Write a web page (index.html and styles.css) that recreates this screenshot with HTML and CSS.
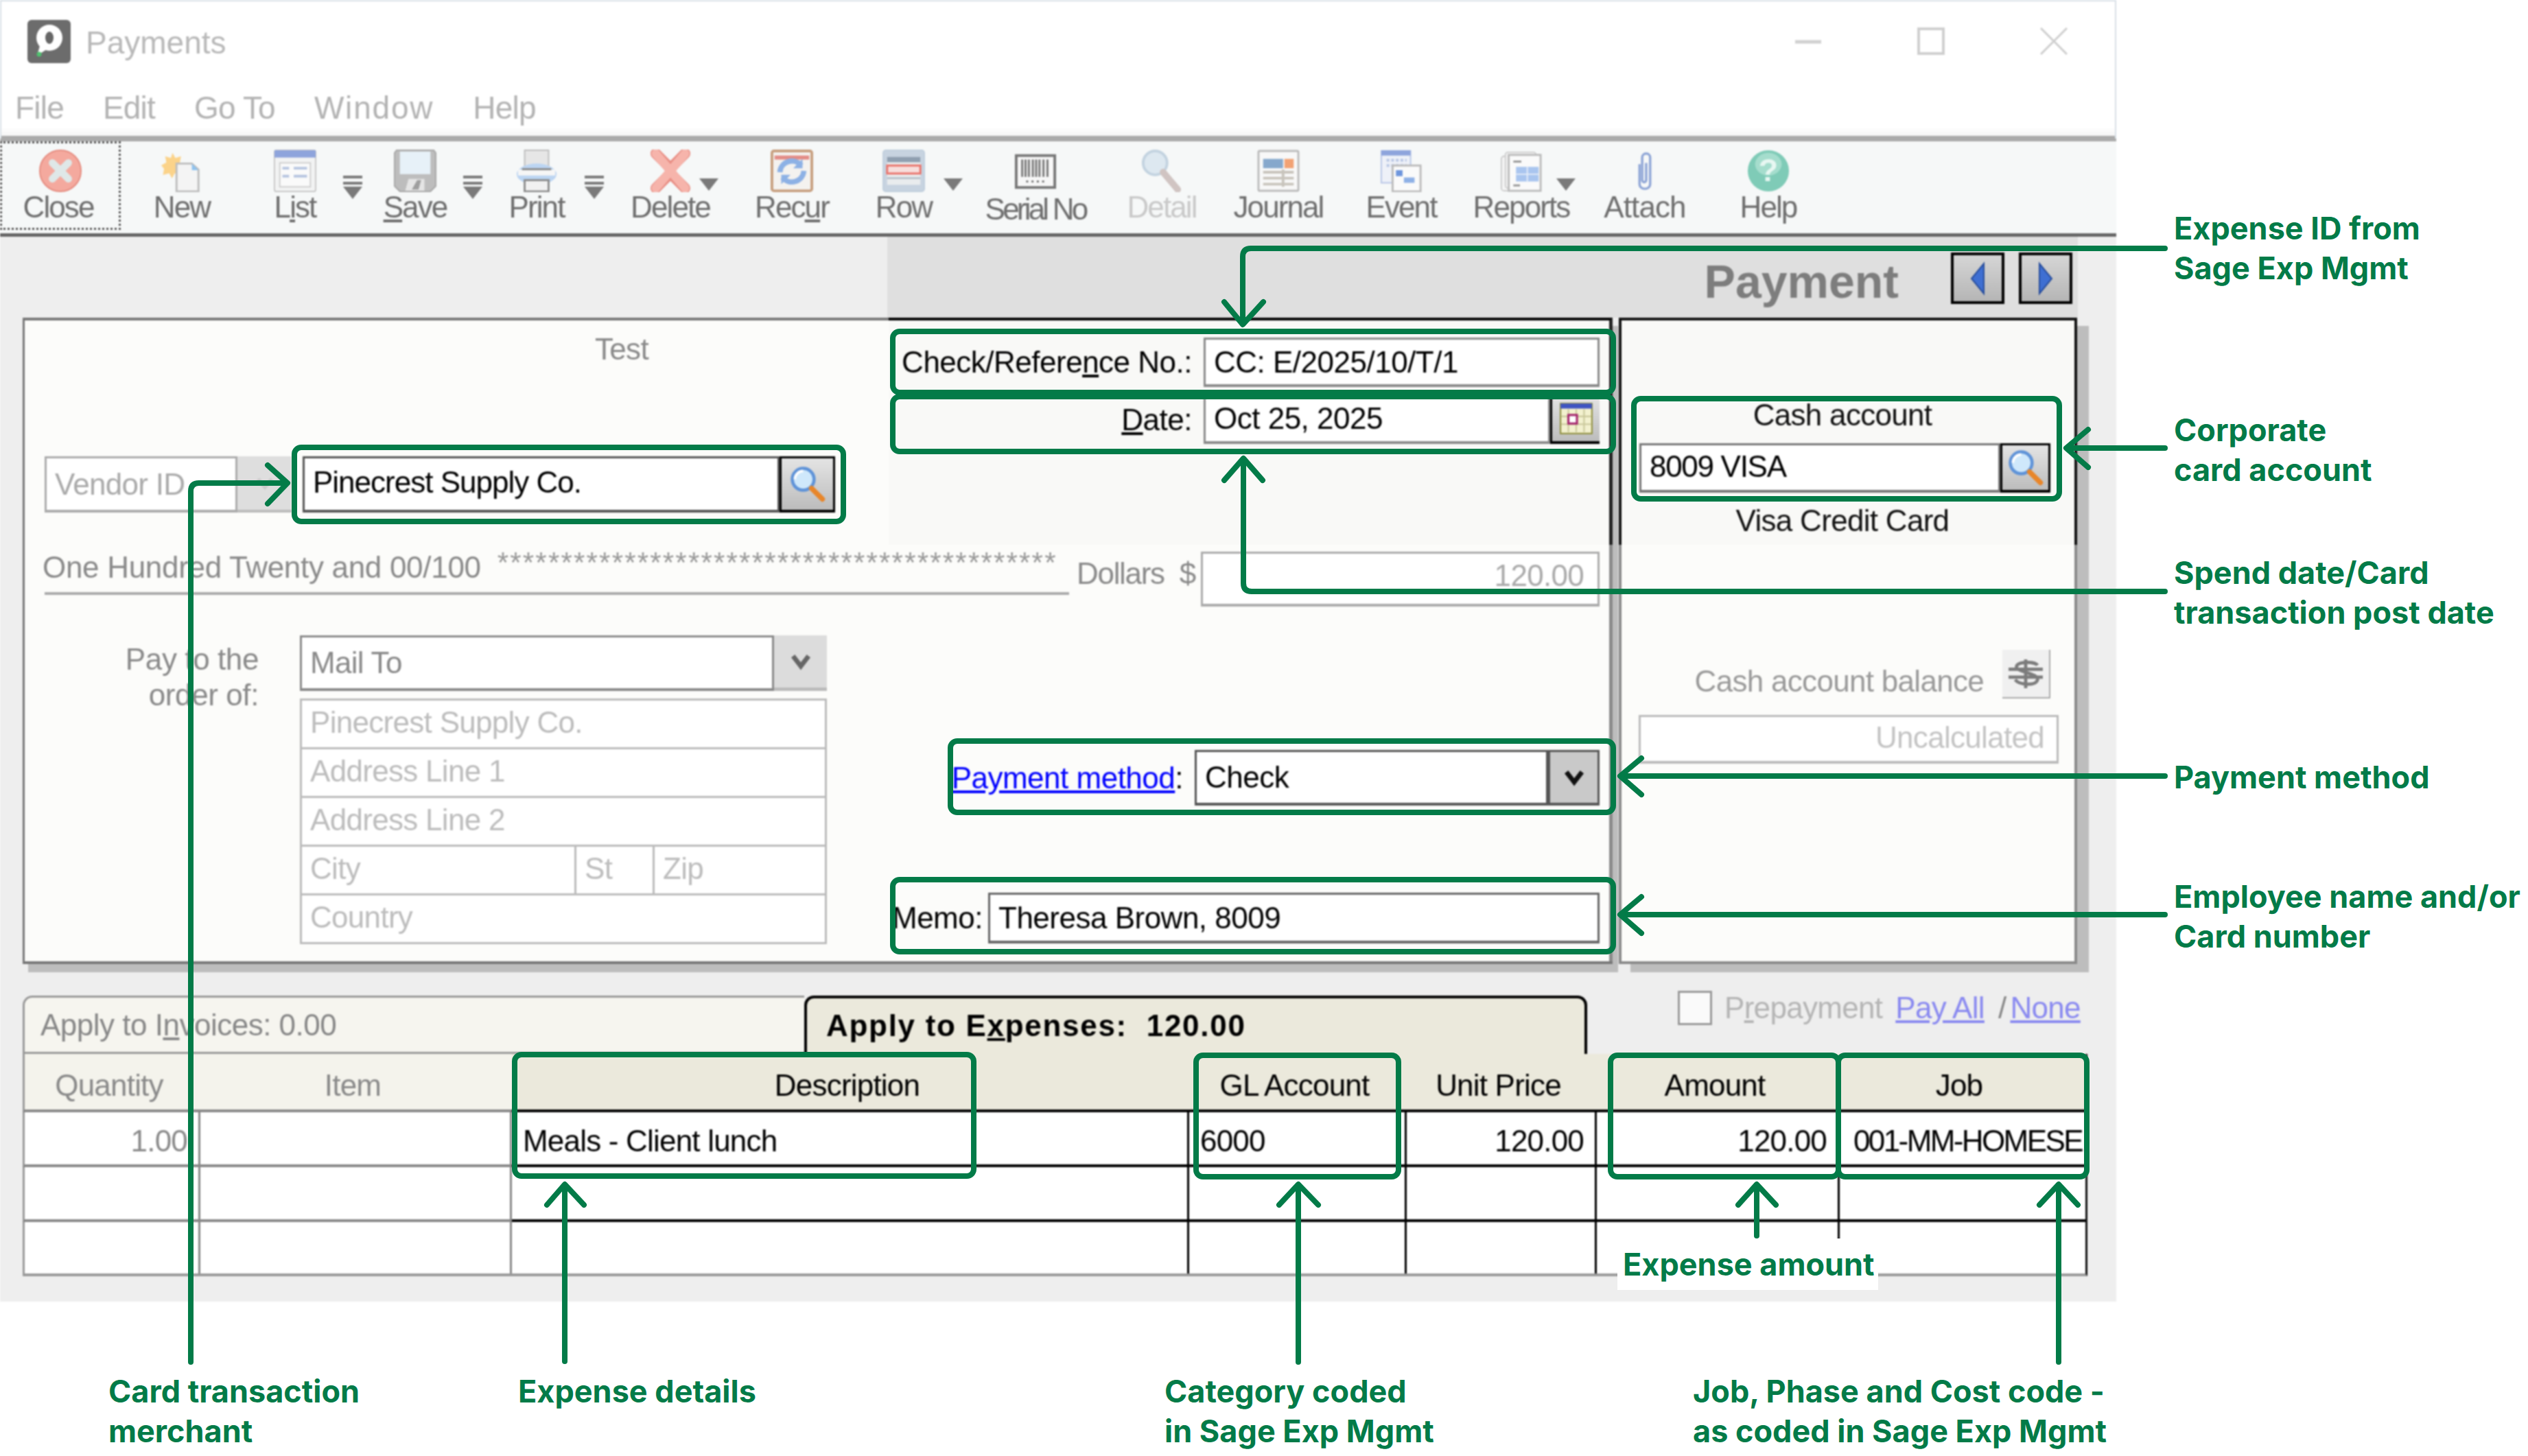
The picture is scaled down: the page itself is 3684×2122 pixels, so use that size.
FILE: index.html
```html
<!DOCTYPE html>
<html lang="en">
<head>
  <meta charset="UTF-8" />
  <title>Payments</title>
  <link rel="stylesheet" href="styles.css">
</head>
<body>
  <svg class="sprites" width="0" height="0">
    <symbol id="lens" viewBox="0 0 60 60">
      <circle cx="23" cy="22" r="17" fill="#cfe8fb" stroke="#5f93d8" stroke-width="5"/>
      <path d="M10 22a13 13 0 0 1 13-13" fill="none" stroke="#fff" stroke-width="4"/>
      <path d="M36 36l17 17" stroke="#e8862a" stroke-width="8" stroke-linecap="round"/>
    </symbol>
  </svg>

  <div class="window">
    <header class="titlebar">
      <svg class="app-icon" viewBox="0 0 63 63">
        <rect width="63" height="63" rx="6" fill="#6c6c6c"/>
        <circle cx="32" cy="26" r="19" fill="#fff"/>
        <path d="M18 38l-4 14 14-9z" fill="#fff"/>
        <ellipse cx="32" cy="26" rx="6" ry="9" fill="#666"/>
        <circle cx="17" cy="50" r="3.5" fill="#4fc36f"/>
      </svg>
      <span class="app-title">Payments</span>
      <div class="win-controls">
        <svg class="win-ctl" viewBox="0 0 40 40"><path d="M1 21h38" stroke="#d0d0d0" stroke-width="5"/></svg>
        <svg class="win-ctl" viewBox="0 0 40 40"><rect x="2" y="2" width="36" height="36" fill="none" stroke="#cfcfcf" stroke-width="4"/></svg>
        <svg class="win-ctl" viewBox="0 0 40 40"><path d="M1 1l38 38M39 1L1 39" stroke="#cfcfcf" stroke-width="3"/></svg>
      </div>
    </header>

    <nav class="menubar">
      <span>File</span><span>Edit</span><span>Go To</span><span class="menu-wide">Window</span><span>Help</span>
    </nav>

    <div class="toolbar">
      <div class="tool t-close focused">
        <svg class="tool-icon" viewBox="0 0 64 64"><ellipse cx="32" cy="32" rx="31" ry="31" fill="#f4a99e" stroke="#e58c80" stroke-width="2"/><path d="M20 20l24 24M44 20L20 44" stroke="#dfe8e8" stroke-width="11" stroke-linecap="round"/></svg>
        <span class="tool-label">Close</span>
      </div>
      <div class="tool t-new">
        <svg class="tool-icon" viewBox="0 0 64 64"><path d="M20 0l5 9 10-3-2 11 9 5-9 6 2 11-11-3-5 9-5-9-11 3 2-11-5-6 9-5-2-11 10 3z" fill="#fbd38a" transform="translate(1 5) scale(.85)"/><path d="M24 21h23l10 9v33H24z" fill="#f4f4f4" stroke="#bdbdbd" stroke-width="3"/><path d="M47 21l10 10H47z" fill="#8fc3ef"/></svg>
        <span class="tool-label">New</span>
      </div>
      <div class="tool t-list">
        <svg class="tool-icon" viewBox="0 0 64 64"><rect x="1" y="1" width="62" height="62" rx="3" fill="#f2f3f3" stroke="#c8c8c8" stroke-width="2"/><rect x="1" y="1" width="62" height="11" fill="#8ea4dc"/><rect x="9" y="20" width="46" height="36" fill="#fafafa" stroke="#cfcfcf" stroke-width="2"/><path d="M13 28h10M13 40h10M30 28h20M30 40h20" stroke="#b7c5e0" stroke-width="4"/></svg>
        <span class="tool-label">L<u>i</u>st</span>
        <span class="caret stacked"></span>
      </div>
      <div class="tool t-save">
        <svg class="tool-icon" viewBox="0 0 64 64"><path d="M4 1h56l3 4v50l-8 8H9l-8-8V5z" fill="#bdbdbd" stroke="#a8a8a8" stroke-width="2"/><rect x="9" y="3" width="46" height="34" fill="#e7f1f8"/><path d="M17 62l5-18h24v18z" fill="#e5e5e5"/><path d="M27 60l8-14h6l-4 14z" fill="#9e9e9e"/></svg>
        <span class="tool-label"><u>S</u>ave</span>
        <span class="caret stacked"></span>
      </div>
      <div class="tool t-print">
        <svg class="tool-icon" viewBox="0 0 64 64"><rect x="14" y="1" width="36" height="32" fill="#e6e6e6" stroke="#bdbdbd" stroke-width="2"/><ellipse cx="32" cy="37" rx="30" ry="16" fill="#bcd5f2"/><rect x="4" y="30" width="56" height="9" fill="#f6f6f6"/><rect x="10" y="28" width="44" height="3" fill="#8a8a8a"/><rect x="14" y="46" width="36" height="17" fill="#f1f1f1" stroke="#8c8c8c" stroke-width="3"/></svg>
        <span class="tool-label">Print</span>
        <span class="caret stacked"></span>
      </div>
      <div class="tool t-delete">
        <svg class="tool-icon" viewBox="0 0 64 64"><path d="M10 6l22 22L54 6M10 58l22-22 22 22" fill="none" stroke="#e88e84" stroke-width="16" stroke-linecap="round" stroke-linejoin="round"/><path d="M10 6l44 52M54 6L10 58" stroke="#f6b4ab" stroke-width="13" stroke-linecap="round"/></svg>
        <span class="tool-label">Delete</span>
        <span class="caret caret-delete"></span>
      </div>
      <div class="tool t-recur">
        <svg class="tool-icon" viewBox="0 0 64 64"><rect x="2" y="2" width="60" height="60" rx="3" fill="#f4f2ef" stroke="#c79f7f" stroke-width="4"/><rect x="6" y="9" width="52" height="6" fill="#e38c86"/><path d="M14 34a18 18 0 0 1 32-10M50 32a18 18 0 0 1-32 10" fill="none" stroke="#8db1e5" stroke-width="8"/><path d="M48 14v14H34zM16 52V38h14z" fill="#8db1e5"/></svg>
        <span class="tool-label">Rec<u>u</u>r</span>
      </div>
      <div class="tool t-row">
        <svg class="tool-icon" viewBox="0 0 64 64"><rect x="1" y="1" width="62" height="62" rx="4" fill="#c7d3e0" stroke="#c0cfdd" stroke-width="2"/><rect x="7" y="11" width="50" height="42" fill="#e9ecee"/><rect x="7" y="11" width="50" height="8" fill="#8f9fb0"/><path d="M7 33h50M7 43h50" stroke="#b6bfc8" stroke-width="3"/><rect x="7" y="24" width="50" height="12" fill="#f7dedc" stroke="#e9726a" stroke-width="3"/></svg>
        <span class="tool-label">Row</span>
        <span class="caret caret-row"></span>
      </div>
      <div class="tool t-serial">
        <svg class="tool-icon" viewBox="0 0 64 64"><rect x="3" y="9" width="58" height="48" fill="#f7f7f7" stroke="#777" stroke-width="4"/><path d="M12 15v26M17 15v26M22 15v26M28 15v26M33 15v26M38 15v26M44 15v26M50 15v26" stroke="#777" stroke-width="3"/><path d="M18 48h3M26 48h3M34 48h3M42 48h3" stroke="#777" stroke-width="3"/></svg>
        <span class="tool-label">Serial No</span>
      </div>
      <div class="tool t-detail dim">
        <svg class="tool-icon" viewBox="0 0 64 64"><circle cx="22" cy="20" r="18" fill="#dde8f0" stroke="#c3d3e0" stroke-width="4"/><path d="M34 34l22 26" stroke="#d0c4c2" stroke-width="10" stroke-linecap="round"/></svg>
        <span class="tool-label">Detail</span>
      </div>
      <div class="tool t-journal">
        <svg class="tool-icon" viewBox="0 0 64 64"><rect x="2" y="2" width="60" height="60" rx="2" fill="#f8f8f8" stroke="#bbb" stroke-width="3"/><rect x="9" y="14" width="30" height="14" fill="#86a8cc"/><rect x="41" y="14" width="14" height="14" fill="#f2a274"/><path d="M9 34h46M9 43h46M9 52h46M39 30v26" stroke="#c8c4bc" stroke-width="4"/></svg>
        <span class="tool-label">Journal</span>
      </div>
      <div class="tool t-event">
        <svg class="tool-icon" viewBox="0 0 64 64"><rect x="2" y="2" width="44" height="48" fill="#eef1f8" stroke="#b7c5e6" stroke-width="2"/><rect x="2" y="1" width="44" height="8" fill="#8ea4dc"/><path d="M10 16h30M10 24h30" stroke="#b8c6e4" stroke-width="4" stroke-dasharray="4 3"/><rect x="19" y="24" width="42" height="39" fill="#fafafa" stroke="#bbb" stroke-width="3"/><rect x="24" y="31" width="10" height="9" fill="#6d95dc"/><rect x="36" y="42" width="16" height="8" fill="#8eb0e6"/></svg>
        <span class="tool-label">Event</span>
      </div>
      <div class="tool t-reports">
        <svg class="tool-icon" viewBox="0 0 64 64"><rect x="2" y="10" width="46" height="52" rx="4" fill="#f5f5f5" stroke="#ccc" stroke-width="2"/><rect x="8" y="4" width="46" height="54" rx="4" fill="#f5f5f5" stroke="#ccc" stroke-width="2"/><rect x="13" y="8" width="48" height="54" fill="#fafafa" stroke="#bbb" stroke-width="3"/><path d="M20 18h12M20 54h10" stroke="#999" stroke-width="3"/><rect x="24" y="26" width="34" height="22" fill="#a9c5ef"/><path d="M24 37h34M41 26v22" stroke="#e6eef9" stroke-width="2"/></svg>
        <span class="tool-label">Reports</span>
        <span class="caret caret-reports"></span>
      </div>
      <div class="tool t-attach">
        <svg class="tool-icon" viewBox="0 0 64 64"><path d="M24 22V52a8 7 0 0 0 16 0V12a6 6 0 0 0-12 0V46a3 3 0 0 0 6 0V20" fill="none" stroke="#8ea5d6" stroke-width="3.5"/></svg>
        <span class="tool-label">Attach</span>
      </div>
      <div class="tool t-help">
        <svg class="tool-icon" viewBox="0 0 64 64"><ellipse cx="32" cy="32" rx="31" ry="31" fill="#7fcbb7"/><ellipse cx="32" cy="22" rx="20" ry="17" fill="#a5ddcd"/><text class="help-mark" x="32" y="47" text-anchor="middle">?</text></svg>
        <span class="tool-label">Help</span>
      </div>
    </div>

    <main class="content">
      <div class="heading">
        <h1 class="doc-title">Payment</h1>
        <button class="nav-btn"><svg viewBox="0 0 30 50"><path d="M24 3v44L6 25z" fill="#3f6fd2" stroke="#274d9c" stroke-width="2"/></svg></button>
        <button class="nav-btn"><svg viewBox="0 0 30 50"><path d="M6 3v44l18-22z" fill="#3f6fd2" stroke="#274d9c" stroke-width="2"/></svg></button>
      </div>

      <div class="panels">
        <section class="panel-left">
          <div class="band-top">
            <div class="payee-top">
              <div class="test-line">Test</div>
              <div class="vendor-row">
                <div class="field vendor-id faded">Vendor ID</div>
                <div class="drop-btn vendor-drop"><svg viewBox="0 0 30 30"><path d="M6 10l9 10 9-10" fill="none" stroke="#c9c9c9" stroke-width="5"/></svg></div>
                <div class="field vendor-name">Pinecrest Supply Co.</div>
                <div class="look-btn vendor-look"><svg class="lens"><use href="#lens"/></svg></div>
              </div>
            </div>
            <div class="check-top">
              <div class="field-row ref-row">
                <label class="field-label">Check/Refere<u>n</u>ce No.:</label>
                <div class="field">CC: E/2025/10/T/1</div>
              </div>
              <div class="field-row date-row">
                <label class="field-label"><u>D</u>ate:</label>
                <div class="date-box">
                  <div class="field date-field">Oct 25, 2025</div>
                  <div class="look-btn cal-btn">
                    <svg viewBox="0 0 50 50"><rect x="3" y="4" width="44" height="42" fill="#f3f1cf" stroke="#8e8e3c" stroke-width="2"/><rect x="3" y="4" width="44" height="7" fill="#3f55c2"/><path d="M14 12v32M25 12v32M36 12v32M4 22h42M4 33h42" stroke="#c9c79a" stroke-width="2"/><rect x="14" y="20" width="12" height="12" fill="#fff" stroke="#a4246c" stroke-width="3"/></svg>
                  </div>
                </div>
              </div>
            </div>
          </div>

          <div class="band-amount">
            <div class="words">
              <span class="words-text">One Hundred Twenty and 00/100</span>
              <span class="stars">********************************************</span>
            </div>
            <div class="dollars">Dollars&nbsp;&nbsp;$</div>
            <div class="field amount-field faded">120.00</div>
          </div>

          <div class="band-bottom">
            <div class="payee-bottom">
              <div class="pay-label">Pay to the<br>order of:</div>
              <div class="address">
                <div class="mail-row">
                  <div class="field mail-field">Mail To</div>
                  <div class="drop-btn mail-drop"><svg viewBox="0 0 30 30"><path d="M5 8l10 13 10-13" fill="none" stroke="#666" stroke-width="6"/></svg></div>
                </div>
                <div class="addr-lines">
                  <div class="addr-line">Pinecrest Supply Co.</div>
                  <div class="addr-line">Address Line 1</div>
                  <div class="addr-line">Address Line 2</div>
                  <div class="addr-line addr-city">
                    <span>City</span><span>St</span><span>Zip</span>
                  </div>
                  <div class="addr-line">Country</div>
                </div>
              </div>
            </div>
            <div class="check-bottom">
              <div class="field-row method-row">
                <label class="field-label"><a class="link" href="#">Payment method</a>:</label>
                <div class="method-box">
                  <div class="field method-field">Check</div>
                  <div class="drop-btn method-drop"><svg viewBox="0 0 30 30"><path d="M5 8l10 13 10-13" fill="none" stroke="#111" stroke-width="6"/></svg></div>
                </div>
              </div>
              <div class="memo-row">
                <label class="field-label">Memo:</label>
                <div class="field memo-field">Theresa Brown, 8009</div>
              </div>
            </div>
          </div>
        </section>

        <section class="panel-right">
          <div class="cash-top">
            <div class="cash-title">Cash account</div>
            <div class="cash-input">
              <div class="field cash-field">8009 VISA</div>
              <div class="look-btn cash-look"><svg class="lens"><use href="#lens"/></svg></div>
            </div>
            <div class="cash-title cash-name">Visa Credit Card</div>
          </div>
          <div class="cash-bottom">
            <div class="balance-row">
              <span>Cash account balance</span>
              <div class="dollar-btn">
                <svg viewBox="0 0 60 50"><path d="M48 12c-4-6-30-6-32 2s34 10 32 20-28 8-34 0M4 18h52M4 30h52M30 3v44" fill="none" stroke="#7c7c7c" stroke-width="5"/></svg>
              </div>
            </div>
            <div class="field uncalc">Uncalculated</div>
          </div>
        </section>
      </div>

      <div class="tabs-row">
        <div class="tab tab-off">Apply to I<u>n</u>voices: 0.00</div>
        <div class="tab tab-on">Apply to E<u>x</u>penses: &nbsp;120.00</div>
        <div class="prepay">
          <span class="checkbox"></span>
          <span class="prepay-label">P<u>r</u>epayment</span>
          <a class="link soft" href="#">Pay All</a>
          <span class="slash">/</span>
          <a class="link soft" href="#">None</a>
        </div>
      </div>

      <table class="lines">
        <colgroup>
          <col class="c-qty"><col class="c-item"><col class="c-desc"><col class="c-gl"><col class="c-price"><col class="c-amt"><col class="c-job">
        </colgroup>
        <thead>
          <tr>
            <th class="off">Quantity</th>
            <th class="off">Item</th>
            <th>Description</th>
            <th>GL Account</th>
            <th>Unit Price</th>
            <th>Amount</th>
            <th>Job</th>
          </tr>
        </thead>
        <tbody>
          <tr>
            <td class="off num">1.00</td>
            <td class="off"></td>
            <td>Meals - Client lunch</td>
            <td>6000</td>
            <td class="num">120.00</td>
            <td class="num">120.00</td>
            <td class="job">001-MM-HOMESE</td>
          </tr>
          <tr><td class="off"></td><td class="off"></td><td></td><td></td><td></td><td></td><td></td></tr>
          <tr><td class="off"></td><td class="off"></td><td></td><td></td><td></td><td></td><td></td></tr>
        </tbody>
      </table>
    </main>
  </div>

  <!-- callouts drawn over the screenshot -->
  <svg class="marks" viewBox="0 0 3684 2122">
    <g class="box">
      <rect x="429" y="652" width="800" height="108" rx="10"/>
      <rect x="1301" y="483" width="1050" height="89" rx="10"/>
      <rect x="1301" y="578" width="1050" height="80" rx="10"/>
      <rect x="2381" y="581" width="620" height="146" rx="10"/>
      <rect x="1385" y="1080" width="966" height="104" rx="10"/>
      <rect x="1301" y="1282" width="1050" height="105" rx="10"/>
      <rect x="750" y="1537" width="669" height="177" rx="10"/>
      <rect x="1743" y="1538" width="295" height="177" rx="10"/>
      <rect x="2347" y="1538" width="332" height="177" rx="10"/>
      <rect x="2679" y="1538" width="362" height="177" rx="10"/>
    </g>
    <g class="arrow">
      <path d="M3155 362H1823Q1811 362 1811 374V471"/><path d="M1784 440L1811 473L1841 440"/>
      <path d="M3155 862H1824Q1812 862 1812 850V672"/><path d="M1784 700L1812 668L1840 700"/>
      <path d="M3155 653H3015"/><path d="M3043 626L3011 653L3043 681"/>
      <path d="M3155 1131H2365"/><path d="M2392 1105L2361 1131L2392 1158"/>
      <path d="M3155 1333H2365"/><path d="M2392 1307L2361 1333L2392 1360"/>
      <path d="M278 1985V716Q278 704 290 704H415"/><path d="M390 678L419 704L390 734"/>
      <path d="M823 1984V1730"/><path d="M797 1756L823 1726L851 1756"/>
      <path d="M1892 1985V1730"/><path d="M1864 1756L1892 1726L1921 1756"/>
      <path d="M2560 1801V1730"/><path d="M2533 1756L2560 1726L2588 1756"/>
      <path d="M3000 1985V1730"/><path d="M2972 1756L3000 1726L3028 1756"/>
    </g>
  </svg>

  <p class="note n-expense-id">Expense ID from<br>Sage Exp Mgmt</p>
  <p class="note n-corporate">Corporate<br>card account</p>
  <p class="note n-spend">Spend date/Card<br>transaction post date</p>
  <p class="note n-method">Payment method</p>
  <p class="note n-employee">Employee name and/or<br>Card number</p>
  <p class="note n-merchant">Card transaction<br>merchant</p>
  <p class="note n-details">Expense details</p>
  <p class="note n-category">Category coded<br>in Sage Exp Mgmt</p>
  <p class="note n-job">Job, Phase and Cost code -<br>as coded in Sage Exp Mgmt</p>
  <p class="note n-amount">Expense amount</p>
</body>
</html>
```

FILE: styles.css
```css
* {
  box-sizing: border-box;
}

html, body {
  margin: 0;
  background: #fff;
}

body {
  position: relative;
  width: 3684px;
  height: 2122px;
  overflow: hidden;
  font-family: "Liberation Sans", Arial, sans-serif;
}

.sprites {
  position: absolute;
}

/* window */
.window {
  position: relative;
  width: 3084px;
  height: 1897px;
  display: flex;
  flex-direction: column;
  background: #eee;
  font-size: 44px;
  letter-spacing: -0.7px;
  color: #000;
  filter: blur(0.9px);
}

.window::after {
  content: "";
  position: absolute;
  inset: 0 0 auto 0;
  height: 200px;
  border: solid #d7dfe6;
  border-width: 2px 2px 0 2px;
}

.titlebar {
  height: 120px;
  flex: none;
  display: flex;
  align-items: center;
  gap: 22px;
  padding-left: 40px;
  background: #fff;
}

.app-icon {
  width: 63px;
  height: 63px;
}

.app-title {
  margin-top: 3px;
  font-size: 46px;
  letter-spacing: 0;
  color: #b9b9b9;
}

.win-controls {
  margin-left: auto;
  margin-right: 71px;
  display: flex;
  gap: 139px;
}

.win-ctl {
  width: 40px;
  height: 40px;
}

.menubar {
  height: 78px;
  flex: none;
  display: flex;
  gap: 57px;
  padding-left: 22px;
  padding-top: 12px;
  font-size: 46px;
  letter-spacing: -0.8px;
  line-height: 50px;
  color: #b3b3b3;
  background: linear-gradient(#fff 84%, #f5f5f5);
}

.menu-wide {
  letter-spacing: 1.8px;
}

/* toolbar */
.toolbar {
  height: 147px;
  flex: none;
  display: flex;
  background: #f6f8f8;
  border-top: 8px solid #aaa;
  border-bottom: 5px solid #666;
}

.tool {
  position: relative;
  flex: none;
  display: flex;
  flex-direction: column;
  align-items: center;
  padding-top: 12px;
  font-size: 44px;
  letter-spacing: -1.9px;
  color: #6e6e6e;
}

.tool-icon {
  width: 62px;
  height: 62px;
  flex: none;
}

.tool-label {
  line-height: 44px;
  white-space: nowrap;
}

.focused {
  outline: 3px dotted #555;
  outline-offset: -3px;
  height: 129px;
}

.t-close .tool-label {
  margin-right: 6px;
}

.dim {
  color: #c9c9c9;
}

.t-close { width: 176px; }
.t-new { width: 178px; }
.t-list { width: 152px; }
.t-save { width: 198px; }
.t-print { width: 156px; }
.t-delete { width: 234px; }
.t-recur { width: 120px; }
.t-row { width: 206px; }
.t-serial { width: 178px; letter-spacing: -3.8px; }
.t-detail { width: 190px; }
.t-journal { width: 150px; }
.t-event { width: 208px; }
.t-reports { width: 142px; }
.t-attach { width: 218px; letter-spacing: -0.9px; }
.t-help { width: 142px; }

.t-serial .tool-label {
  margin-top: 3px;
}

.caret {
  position: absolute;
  top: 54px;
  left: calc(50% + 42px);
  width: 0;
  height: 0;
  border-left: 14px solid transparent;
  border-right: 14px solid transparent;
  border-top: 18px solid #7a7a7a;
}

.caret-row { left: calc(50% + 58px); }
.caret-reports { left: calc(50% + 51px); }

.caret.stacked {
  left: calc(50% + 70px);
  top: 66px;
}

.caret.stacked::before {
  content: "";
  position: absolute;
  left: -14px;
  top: -25px;
  width: 28px;
  height: 4px;
  background: #7a7a7a;
  box-shadow: 0 -9px 0 #7a7a7a;
}

.help-mark {
  font-size: 48px;
  font-weight: 700;
  fill: #e8f7f2;
  letter-spacing: 0;
}

/* form area */
.content {
  flex: 1;
  display: flex;
  flex-direction: column;
  background: #eee;
}

.heading {
  height: 118px;
  margin-left: 1293px;
  margin-right: 56px;
  padding-top: 23px;
  padding-right: 8px;
  display: flex;
  justify-content: flex-end;
  background: #dfdfdf;
}

.doc-title {
  margin: 4px 76px 0 0;
  font-size: 68px;
  line-height: 76px;
  letter-spacing: 0;
  font-weight: 700;
  color: #7d7d7d;
}

.nav-btn {
  width: 78px;
  height: 75px;
  margin-left: 21px;
  padding: 8px 0;
  border: 4px solid #000;
  background: linear-gradient(#d6d6d6, #b5b5b5);
}

.nav-btn:first-of-type {
  margin-left: 0;
}

.nav-btn svg {
  height: 50px;
  display: block;
  margin: 0 auto;
}

.panels {
  display: flex;
  gap: 9px;
  padding-left: 33px;
  flex: none;
}

.panel-left {
  width: 2317px;
  height: 942px;
  display: flex;
  flex-direction: column;
  background: #fcfcfa;
  border-left: 3px solid #777;
  border-bottom: 4px solid #777;
  box-shadow: 8px 12px 0 #bdbdbd;
}

.band-top {
  height: 331px;
  flex: none;
  display: grid;
  grid-template-columns: 1259px 1fr;
}

.payee-top {
  border-top: 4px solid #777;
  padding-left: 29px;
}

.test-line {
  margin-top: 17px;
  margin-left: 452px;
  height: 50px;
  line-height: 50px;
  text-align: center;
  color: #8a8a8a;
}

.vendor-row {
  margin-top: 131px;
  height: 82px;
  display: flex;
}

.field {
  background: #fff;
  border: 3px solid #8a8a8a;
  border-bottom-width: 4px;
  padding-left: 12px;
  display: flex;
  align-items: center;
  white-space: nowrap;
  overflow: hidden;
}

.vendor-id {
  width: 281px;
}

.faded {
  color: #aaa;
  border-color: #ababab;
}

.drop-btn {
  display: flex;
  align-items: center;
  justify-content: center;
  background: #d9d9d9;
}

.drop-btn svg {
  width: 34px;
  height: 34px;
}

.vendor-drop {
  width: 79px;
  background: #dedede;
  border-bottom: 4px solid #bbb;
}

.vendor-name {
  width: 695px;
  margin-left: 16px;
  padding-bottom: 6px;
  letter-spacing: -1px;
  border-color: #555;
}

.look-btn {
  display: flex;
  align-items: center;
  justify-content: center;
  background: linear-gradient(#e4e4e4, #bcbcbc);
  border: 3px solid #000;
  border-bottom-width: 4px;
}

.lens {
  width: 56px;
  height: 56px;
}

.vendor-look {
  width: 81px;
}

.check-top {
  background: #f9f9f7;
  border-top: 4px solid #000;
  border-right: 5px solid #222;
}

.field-row {
  display: grid;
  grid-template-columns: 442px 577px;
  column-gap: 17px;
  letter-spacing: -0.5px;
}

.field-label {
  display: flex;
  align-items: center;
  justify-content: flex-end;
  white-space: nowrap;
}

.ref-row {
  margin-top: 25px;
  height: 72px;
}

.date-row {
  margin-top: 13px;
  height: 70px;
}

.date-box {
  display: flex;
}

.date-field {
  flex: 1;
  padding-bottom: 4px;
  border-top-color: #fff;
}

.cal-btn {
  width: 72px;
  border-width: 0 0 4px 3px;
}

.cal-btn svg {
  width: 52px;
  height: 52px;
}

.band-amount {
  height: 106px;
  flex: none;
  display: flex;
  padding-left: 29px;
  border-right: 5px solid #8a8a8a;
}

.words {
  width: 1493px;
  height: 73px;
  flex: none;
  display: flex;
  border-bottom: 4px solid #aaa;
  color: #8a8a8a;
}

.words-text {
  flex: none;
  margin-top: 8px;
  margin-left: -3px;
  line-height: 50px;
  letter-spacing: -0.3px;
  white-space: nowrap;
}

.stars {
  flex: none;
  margin-left: 24px;
  font-size: 42px;
  line-height: 52px;
  letter-spacing: 2.2px;
  white-space: nowrap;
  color: #999;
}

.dollars {
  width: 170px;
  flex: none;
  margin-left: 11px;
  margin-top: 17px;
  line-height: 50px;
  letter-spacing: -1.3px;
  white-space: nowrap;
  color: #8a8a8a;
}

.amount-field {
  width: 581px;
  height: 80px;
  margin-left: 11px;
  margin-top: 10px;
  padding-right: 20px;
  padding-bottom: 10px;
  justify-content: flex-end;
}

.band-bottom {
  flex: 1;
  display: grid;
  grid-template-columns: 1259px 1fr;
  border-right: 5px solid #8a8a8a;
}

.payee-bottom {
  display: flex;
}

.pay-label {
  width: 341px;
  margin-top: 35px;
  margin-right: 60px;
  line-height: 52px;
  letter-spacing: -0.4px;
  text-align: right;
  color: #8a8a8a;
}

.address {
  width: 768px;
  margin-top: 26px;
}

.mail-row {
  height: 81px;
  display: flex;
}

.mail-field {
  width: 691px;
  color: #8a8a8a;
}

.mail-drop {
  width: 77px;
  background: #dcdcdc;
  border-bottom: 5px solid #bbb;
}

.addr-lines {
  margin-top: 11px;
  border: 3px solid #bbb;
  border-bottom-width: 0;
}

.addr-line {
  height: 71px;
  padding-left: 12px;
  padding-bottom: 4px;
  display: flex;
  align-items: center;
  background: #fff;
  color: #bdbdbd;
  border-bottom: 3px solid #bbb;
}

.addr-city {
  padding-left: 0;
  padding-bottom: 0;
  display: grid;
  grid-template-columns: 400px 114px 1fr;
  align-items: stretch;
}

.addr-city span {
  display: flex;
  align-items: center;
  padding-left: 12px;
  padding-bottom: 4px;
  border-right: 3px solid #bbb;
}

.addr-city span:last-child {
  border-right: 0;
}

.method-row {
  margin-top: 193px;
  height: 81px;
  grid-template-columns: 429px 590px;
  column-gap: 17px;
}

.method-box {
  display: flex;
}

.method-field {
  flex: 1;
  border-color: #555;
}

.method-drop {
  width: 75px;
  background: #c9c9c9;
  border: 3px solid #555;
  border-bottom-width: 4px;
}

.link {
  color: #00f;
  text-decoration: underline;
}

.memo-row {
  margin-top: 127px;
  height: 74px;
  display: flex;
  padding-left: 5px;
  letter-spacing: -0.5px;
}

.memo-row .field-label {
  width: 128px;
  justify-content: flex-start;
}

.memo-field {
  width: 891px;
  margin-left: 12px;
  border-color: #666;
}

.panel-right {
  width: 668px;
  height: 942px;
  display: flex;
  flex-direction: column;
  box-shadow: 17px 12px 0 #bdbdbd;
}

.cash-top {
  height: 331px;
  background: #f9f9f7;
  border: solid #111;
  border-width: 4px 4px 0 4px;
}

.cash-title {
  margin-top: 113px;
  padding-right: 16px;
  line-height: 50px;
  text-align: center;
  color: #111;
}

.cash-name {
  margin-top: 16px;
}

.cash-input {
  margin: 16px 0 0 26px;
  height: 72px;
  display: flex;
}

.cash-field {
  width: 526px;
  padding-bottom: 4px;
  letter-spacing: -1.3px;
  border-color: #777;
}

.cash-look {
  width: 73px;
}

.cash-bottom {
  flex: 1;
  background: #fcfcfa;
  border: solid #8a8a8a;
  border-width: 0 4px 4px 4px;
  padding-left: 25px;
}

.balance-row {
  margin-top: 153px;
  height: 71px;
  width: 600px;
  display: flex;
  justify-content: flex-end;
  align-items: flex-end;
  color: #9a9a9a;
}

.dollar-btn {
  width: 70px;
  height: 71px;
  margin-left: 27px;
  display: flex;
  align-items: center;
  justify-content: center;
  background: #f0f0f0;
  border-right: 2px solid #aaa;
  border-bottom: 2px solid #aaa;
}

.dollar-btn svg {
  width: 58px;
  height: 48px;
}

.uncalc {
  width: 612px;
  height: 71px;
  margin-top: 24px;
  padding-right: 18px;
  padding-bottom: 4px;
  justify-content: flex-end;
  color: #c4c4c4;
  border-color: #bbb;
}

/* tabs and lines */
.tabs-row {
  margin-top: 46px;
  margin-left: 33px;
  height: 85px;
  flex: none;
  display: flex;
}

.tab {
  height: 85px;
  padding-top: 15px;
  line-height: 50px;
  white-space: nowrap;
}

.tab-off {
  width: 1139px;
  padding-left: 23px;
  letter-spacing: -0.5px;
  color: #888;
  background: #f6f5ef;
  border: solid #999;
  border-width: 3px 0 3px 3px;
  border-top-left-radius: 14px;
}

.tab-on {
  width: 1141px;
  padding-left: 28px;
  font-weight: 700;
  letter-spacing: 1.7px;
  color: #000;
  background: #ebe9dc;
  border: solid #000;
  border-width: 4px 4px 0 4px;
  border-radius: 14px 14px 0 0;
}

.prepay {
  height: 50px;
  margin-top: -7px;
  margin-left: 132px;
  display: flex;
  align-items: center;
  color: #b5b5b5;
}

.checkbox {
  width: 50px;
  height: 50px;
  margin-right: 18px;
  background: #fafafa;
  border: 3px solid #999;
}

.soft {
  margin-left: 19px;
  color: #8a8af0;
}

.slash {
  margin-left: 20px;
  color: #888;
}

.slash + .soft {
  margin-left: 6px;
}

.lines {
  margin-left: 33px;
  width: 3009px;
  table-layout: fixed;
  border-collapse: separate;
  border-spacing: 0;
  flex: none;
  background: #fff;
  border-right: 3px solid #111;
  border-bottom: 4px solid #999;
  letter-spacing: -0.8px;
}

.c-qty { width: 259px; }
.c-item { width: 454px; }
.c-desc { width: 987px; }
.c-gl { width: 317px; }
.c-price { width: 277px; }
.c-amt { width: 354px; }
.c-job { width: 358px; }

.lines th {
  height: 85px;
  padding: 10px 10px 0 0;
  font-weight: 400;
  color: #000;
  background: #ebe9dc;
  border-bottom: 4px solid #000;
}

.lines th.off {
  color: #8a8a8a;
  background: #f4f3ec;
  border-bottom-color: #888;
}

.lines th:first-child {
  border-left: 3px solid #999;
}

.lines td {
  height: 80px;
  padding: 8px 0 0 16px;
  white-space: nowrap;
  overflow: hidden;
  border-right: 3px solid #000;
  border-bottom: 4px solid #000;
}

.lines tr:last-child td {
  height: 75px;
  border-bottom: 0;
}

.lines td.off {
  color: #8a8a8a;
  border-color: #888;
}

.lines td:first-child {
  border-left: 3px solid #999;
}

.lines td:last-child {
  border-right: 0;
}

.lines td.num {
  padding: 8px 16px 0 0;
  text-align: right;
}

.lines td.job {
  padding-left: 20px;
  letter-spacing: -2.6px;
}

/* callouts */
.marks {
  position: absolute;
  left: 0;
  top: 0;
  width: 3684px;
  height: 2122px;
}

.box rect, .arrow path {
  fill: none;
  stroke: #037b48;
  stroke-width: 8;
  stroke-linecap: round;
  stroke-linejoin: round;
}

.note {
  position: absolute;
  margin: 0;
  font-family: Inter, "Liberation Sans", sans-serif;
  font-size: 45px;
  font-weight: 700;
  line-height: 58px;
  color: #037b48;
  white-space: nowrap;
}

.n-expense-id { left: 3168px; top: 304px; }
.n-corporate { left: 3168px; top: 598px; }
.n-spend { left: 3168px; top: 806px; }
.n-method { left: 3168px; top: 1104px; }
.n-employee { left: 3168px; top: 1278px; }
.n-merchant { left: 158px; top: 1999px; }
.n-details { left: 755px; top: 1999px; }
.n-category { left: 1697px; top: 1999px; }
.n-job { left: 2467px; top: 1999px; }

.n-amount {
  left: 2357px;
  top: 1805px;
  width: 380px;
  height: 75px;
  padding: 9px 0 0 8px;
  background: #fff;
}
```
